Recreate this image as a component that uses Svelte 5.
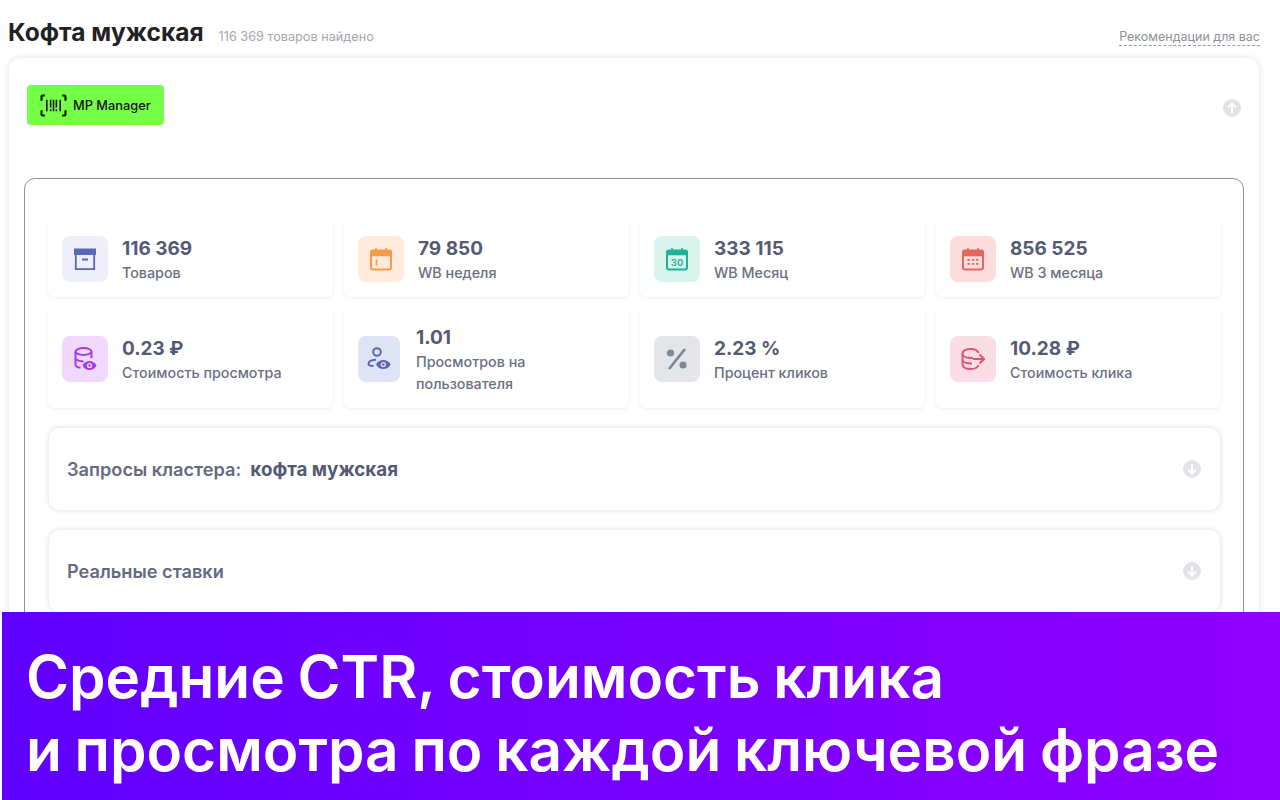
<script>
  const row1 = [
    { value: '116 369', label: 'Товаров', bg: '#eeeffa', icon: 'box' },
    { value: '79 850', label: 'WB неделя', bg: '#ffeadb', icon: 'week' },
    { value: '333 115', label: 'WB Месяц', bg: '#d8f2ec', icon: 'month' },
    { value: '856 525', label: 'WB 3 месяца', bg: '#fddcdc', icon: 'quarter' }
  ];
  const row2 = [
    { value: '0.23 ₽', label: 'Стоимость просмотра', bg: '#f0d9fd', icon: 'dbview' },
    { value: '1.01', label: 'Просмотров на пользователя', bg: '#e0e3f5', icon: 'user', narrow: true },
    { value: '2.23 %', label: 'Процент кликов', bg: '#e3e5e9', icon: 'percent' },
    { value: '10.28 ₽', label: 'Стоимость клика', bg: '#fbdde6', icon: 'dbout' }
  ];
</script>

{#snippet icon(name)}
  <svg viewBox="0 0 24 24" width="24" height="24" fill="none" stroke-width="1.6">
    {#if name === 'box'}
      <rect x="1" y="1.500" width="22" height="6.500" fill="#5a67b5" />
      <path d="M2.800 8v14.200h18.400V8M9 12.500h6" stroke="#5a67b5" stroke-width="1.800" />
    {:else if name === 'week'}
      <rect x="2" y="3.500" width="20" height="19" rx="2" stroke="#f49c4c" stroke-width="2" />
      <path d="M2 4.500h20v4H2zM7 1v3M17 1v3" stroke="#f49c4c" fill="#f49c4c" stroke-width="1.600" />
      <path d="M7.500 12.500v6" stroke="#f49c4c" />
    {:else if name === 'month'}
      <rect x="2" y="3.500" width="20" height="19" rx="2" stroke="#1fb298" stroke-width="2" />
      <path d="M2 4.500h20v3H2zM7 1v3M17 1v3" stroke="#1fb298" fill="#1fb298" stroke-width="1.600" />
      <text x="12" y="18.500" text-anchor="middle" class="thirty">30</text>
    {:else if name === 'quarter'}
      <rect x="2" y="3.500" width="20" height="19" rx="2" stroke="#e2685f" stroke-width="2" />
      <path d="M2 4.500h20v4H2zM7 1v3M17 1v3" stroke="#e2685f" fill="#e2685f" stroke-width="1.600" />
      <path d="M6.500 12.800h2.500M10.800 12.800h2.500M15 12.800h2.500M6.500 16.800h2.500M10.800 16.800h2.500M15 16.800h2.500" stroke="#e2685f" stroke-width="1.800" />
    {:else if name === 'dbview'}
      <g stroke="#a13ee0" stroke-width="2">
        <ellipse cx="10.500" cy="4.500" rx="8" ry="3.400" />
        <path d="M2.500 4.500v13c0 1.600 1.800 2.800 5 3.300M18.500 4.500v6.500M2.500 11c0 1.900 3.500 3.400 8 3.400" />
      </g>
      <path d="M9.500 18.500c1.600-3 4-4.500 7-4.500s5.400 1.500 7 4.500c-1.600 3-4 4.500-7 4.500s-5.400-1.500-7-4.500z" fill="#a13ee0" />
      <circle cx="16.500" cy="18.500" r="2.600" fill="#f0d9fd" />
      <circle cx="16.500" cy="18.500" r="1.200" fill="#a13ee0" />
    {:else if name === 'user'}
      <g stroke="#5a67b5" stroke-width="2">
        <circle cx="10" cy="5" r="3.800" />
        <path d="M9 12.800c-4 .3-7.500 1.800-7.500 4 0 1.800 2 2.300 5 2.300" />
      </g>
      <path d="M9 17.500c1.600-3 4.200-4.500 7.300-4.500s5.700 1.500 7.300 4.500c-1.600 3-4.200 4.500-7.300 4.500S10.600 20.500 9 17.500z" fill="#5a67b5" />
      <circle cx="16.300" cy="17.500" r="2.600" fill="#e0e3f5" />
      <circle cx="16.300" cy="17.500" r="1.200" fill="#5a67b5" />
    {:else if name === 'percent'}
      <path d="M20 2 4 22" stroke="#7f8a96" stroke-width="2.800" />
      <circle cx="5.500" cy="6" r="3.600" fill="#7f8a96" />
      <circle cx="18" cy="18" r="3.600" fill="#7f8a96" />
    {:else if name === 'dbout'}
      <g stroke="#e0527f" stroke-width="2">
        <path d="M17.500 6C16.500 3.500 14 2 10 2 5 2 1.500 3.800 1.500 6.500s3.500 4.500 8.500 4.500h2" />
        <path d="M1.500 6.500v11c0 2.700 3.500 4.500 8.500 4.500 4 0 6.500-1.300 7.500-4M1.500 12c0 2.700 3.500 4.500 8.500 4.500h1" />
        <path d="M12 12h11M18.500 7.500 23 12l-4.500 4.500" />
      </g>
    {/if}
  </svg>
{/snippet}

{#snippet stat(s)}
  <div class="stat" class:narrow={s.narrow}>
    <div class="badge" style:background={s.bg}>
      {@render icon(s.icon)}
    </div>
    <div class="nums">
      <div class="value">{s.value}</div>
      <div class="label">{s.label}</div>
    </div>
  </div>
{/snippet}

{#snippet round(up)}
  <svg class="arrow" viewBox="0 0 18 18" width="18" height="18">
    <circle cx="9" cy="9" r="9" fill="#e2e3e6" />
    {#if up}
      <path d="M9 14V5M5 8.500 9 4.500l4 4" stroke="#fff" stroke-width="2" fill="none" />
    {:else}
      <path d="M9 4v9M5 9.500l4 4 4-4" stroke="#fff" stroke-width="2" fill="none" />
    {/if}
  </svg>
{/snippet}

<div class="page">
  <header>
    <h1>Кофта мужская</h1>
    <span class="found">116 369 товаров найдено</span>
    <a class="recs" href="#recs">Рекомендации для вас</a>
  </header>

  <section class="outer">
    <div class="top">
      <div class="logo">
        <svg viewBox="0 0 28 24" width="27" height="23" fill="none" stroke="#111">
          <path d="M5 1.500H2.500a1 1 0 0 0-1 1V7M23 1.500h2.500a1 1 0 0 1 1 1V7M5 22.500H2.500a1 1 0 0 1-1-1V17M23 22.500h2.500a1 1 0 0 0 1-1V17" stroke-width="2.200" />
          <path d="M7 6v12M11 6v8M11 16v2M14 6v12M17 6v8M17 16v2M21 6v12" stroke-width="1.600" />
        </svg>
        <span>MP Manager</span>
      </div>
      {@render round(true)}
    </div>

    <div class="inner">
      <div class="grid first">
        {#each row1 as s}
          {@render stat(s)}
        {/each}
      </div>
      <div class="grid second">
        {#each row2 as s}
          {@render stat(s)}
        {/each}
      </div>

      <div class="acc">
        <div class="acc-title">Запросы кластера:&nbsp; <b>кофта мужская</b></div>
        {@render round(false)}
      </div>
      <div class="acc">
        <div class="acc-title">Реальные ставки</div>
        {@render round(false)}
      </div>
    </div>
  </section>

  <div class="banner">Средние CTR, стоимость клика<br />и просмотра по каждой ключевой фразе</div>
</div>

<style>
  :global(body) {
    margin: 0;
    background: #fff;
  }
  .page {
    position: relative;
    width: 1280px;
    height: 800px;
    overflow: hidden;
    background: #fff;
    font-family: Inter, "Noto Sans", sans-serif;
    box-sizing: border-box;
    padding: 0 21px 0 8px;
  }
  header {
    height: 58px;
    display: flex;
    align-items: baseline;
    padding-top: 17px;
    box-sizing: border-box;
  }
  h1 {
    margin: 0;
    font-size: 24.500px;
    line-height: 30px;
    font-weight: 700;
    color: #222;
  }
  .found {
    margin-left: 15px;
    font-size: 12.700px;
    color: #a5a6b2;
  }
  .recs {
    margin-left: auto;
    margin-right: -1px;
    font-size: 12.500px;
    color: #8e8f99;
    text-decoration: none;
    border-bottom: 1px dashed #9a9ba5;
    line-height: 17px;
  }
  .outer {
    margin-left: 1px;
    height: 780px;
    background: #fff;
    border-radius: 12px;
    box-shadow: 0 0 6px rgba(60, 60, 80, 0.16);
    padding: 0 15px;
    box-sizing: border-box;
  }
  .top {
    height: 120px;
    display: flex;
    justify-content: space-between;
    align-items: flex-start;
    padding: 27px 3px 0 3px;
    box-sizing: border-box;
  }
  .top .arrow {
    margin-top: 14px;
  }
  .logo {
    width: 137px;
    height: 40px;
    background: #76ff47;
    border-radius: 4px;
    display: flex;
    align-items: center;
    gap: 6px;
    padding: 1px 0 0 13px;
    box-sizing: border-box;
    font-size: 12.800px;
    font-weight: 500;
    color: #111;
  }
  .inner {
    border: 1px solid #8f9094;
    border-radius: 11px;
    padding: 43px 23px 0;
    height: 600px;
    box-sizing: border-box;
  }
  .grid {
    display: grid;
    grid-template-columns: repeat(4, 285px);
    column-gap: 11px;
  }
  .first {
    height: 75px;
  }
  .first .badge {
    margin-top: -1px;
  }
  .first .nums {
    padding-top: 1px;
  }
  .second {
    height: 98px;
    margin-top: 13px;
  }
  .stat {
    display: flex;
    align-items: center;
    gap: 14px;
    padding-left: 14px;
    background: #fff;
    border-radius: 6px;
    box-shadow: 0 1px 3px rgba(70, 70, 100, 0.09);
  }
  .second .nums {
    padding-top: 3px;
  }
  .narrow {
    gap: 16px;
  }
  .narrow .badge {
    width: 42px;
  }
  .second .narrow .nums {
    padding-top: 3px;
    width: 170px;
  }
  .badge {
    flex: none;
    width: 46px;
    height: 46px;
    border-radius: 8px;
    display: flex;
    align-items: center;
    justify-content: center;
  }
  .value {
    font-size: 19px;
    line-height: 24px;
    font-weight: 700;
    color: #545a74;
  }
  .label {
    font-size: 14.300px;
    line-height: 22px;
    margin-top: 1px;
    font-weight: 500;
    color: #6a6f84;
  }
  .acc {
    width: 1171px;
    height: 82px;
    margin: 20px 0 0 1px;
    border-radius: 10px;
    background: #fff;
    box-shadow: 0 0 5px rgba(60, 60, 90, 0.2);
    display: flex;
    align-items: center;
    justify-content: space-between;
    padding: 0 19px 0 18px;
    box-sizing: border-box;
  }
  .acc-title {
    font-size: 18.200px;
    font-weight: 600;
    color: #656a80;
  }
  .acc-title b {
    font-size: 18.800px;
    font-weight: 700;
    color: #545a74;
  }
  .thirty {
    font: 600 9.500px Inter, sans-serif;
    fill: #1fb298;
  }
  .banner {
    position: absolute;
    left: 2px;
    right: 0;
    bottom: 0;
    height: 188px;
    background: linear-gradient(90deg, #5f00ff, #8f00ff);
    color: #fff;
    font-size: 58.500px;
    line-height: 73px;
    font-weight: 600;
    word-spacing: -2px;
    padding: 28px 0 0 24px;
    box-sizing: border-box;
    white-space: nowrap;
  }
</style>
